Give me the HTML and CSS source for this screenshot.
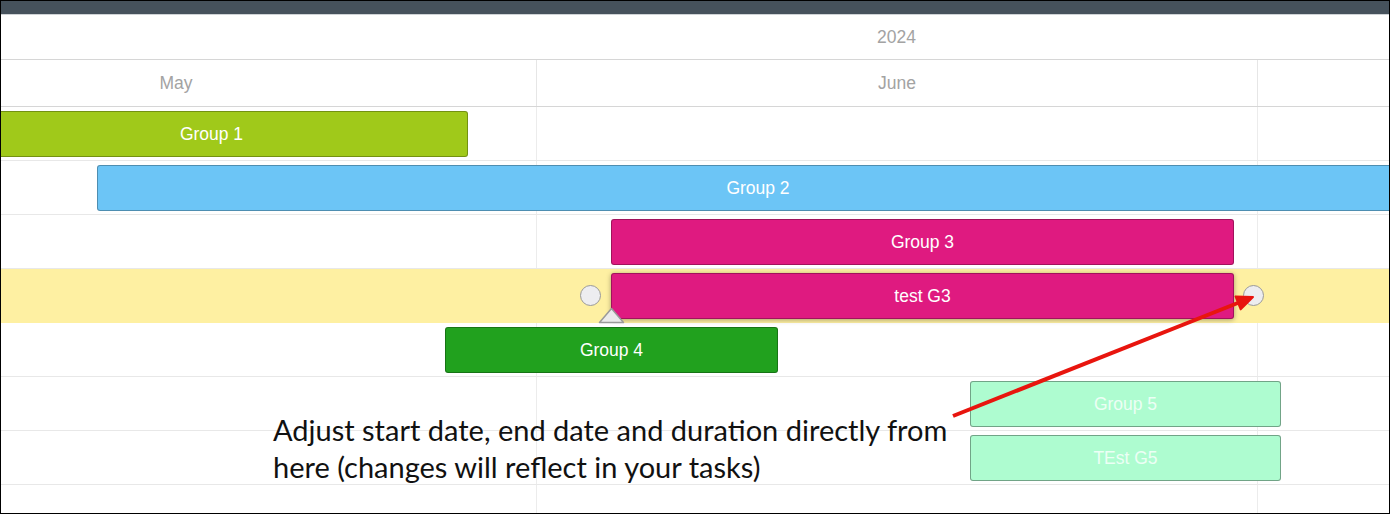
FILE: index.html
```html
<!DOCTYPE html>
<html lang="en">
<head>
    <meta charset="UTF-8">
    <meta name="viewport" content="width=device-width, initial-scale=1.0">
    <title>Gantt - timeline</title>
    <link rel="stylesheet" href="styles.css">
</head>
<body>
    <div class="frame">
        <div class="topbar"></div>

        <!-- timeline header -->
        <div class="year-row"><div class="year">2024</div></div>
        <div class="month-row">
            <div class="month month-first">May</div>
            <div class="month">June</div>
            <div class="month"></div>
        </div>

        <!-- task rows -->
        <div class="rows">
            <div class="row"><div class="bar bar-lime" style="margin-left:-46px;width:513px">Group 1</div></div>
            <div class="row"><div class="bar bar-blue" style="margin-left:96px;width:1322px">Group 2</div></div>
            <div class="row"><div class="bar bar-pink" style="margin-left:610px;width:623px">Group 3</div></div>
            <div class="row row-active"><div class="bar bar-pink bar-selected" style="margin-left:610px;width:623px">test G3</div></div>
            <div class="row"><div class="bar bar-green" style="margin-left:444px;width:333px">Group 4</div></div>
            <div class="row"><div class="bar bar-mint" style="margin-left:969px;width:311px">Group 5</div></div>
            <div class="row"><div class="bar bar-mint" style="margin-left:969px;width:311px">TEst G5</div></div>
            <div class="row row-last"></div>
        </div>

        <!-- drag handles of the selected task -->
        <div class="handle handle-start"></div>
        <div class="handle handle-end"></div>
        <svg class="progress-handle" width="27" height="17" viewBox="0 0 27 17">
            <polygon points="13.5,1.5 25.5,15.5 1.5,15.5" fill="#ebebeb" stroke="#9a9a9a" stroke-width="1.5" stroke-linejoin="round"/>
        </svg>

        <!-- annotation -->
        <svg class="arrow" width="1390" height="514" viewBox="0 0 1390 514">
            <line x1="952" y1="415" x2="1238" y2="301.5" stroke="#e8150e" stroke-width="4"/>
            <polygon points="1252,296 1239.7,308.4 1234.5,295.4" fill="#e8150e" stroke="#e8150e" stroke-width="2" stroke-linejoin="round"/>
        </svg>
        <div class="note">Adjust start date, end date and duration directly from<br>here (changes will reflect in your tasks)</div>
    </div>
</body>
</html>
```

FILE: styles.css
```css
body {
    margin: 0;
    font-family: "Liberation Sans", Arial, sans-serif;
    background: #fff;
}

.frame {
    position: relative;
    width: 1390px;
    height: 514px;
    box-sizing: border-box;
    border: 1px solid #000;
    overflow: hidden;
    background: #fff;
}

.topbar {
    height: 13px;
    background: #46525c;
    border-bottom: 1px solid #cfd3d6;
}

/* header */
.year-row {
    height: 44px;
    border-bottom: 1px solid #d6d6d6;
    padding-left: 535px;
    display: flex;
    align-items: center;
}

.year {
    width: 721px;
    text-align: center;
    color: #a3a3a3;
    font-size: 17.5px;
}

.month-row {
    height: 46px;
    border-bottom: 1px solid #d6d6d6;
    display: flex;
}

.month {
    flex: 0 0 721px;
    box-sizing: border-box;
    border-left: 1px solid #e6e6e6;
    display: flex;
    align-items: center;
    justify-content: center;
    color: #a3a3a3;
    font-size: 17.5px;
}

.month-first {
    margin-left: -186px;
}

/* rows */
.rows {
    background:
        linear-gradient(#ececec, #ececec) 535px 0 / 1px 100% no-repeat,
        linear-gradient(#ececec, #ececec) 1256px 0 / 1px 100% no-repeat;
}

.row {
    height: 49px;
    padding-top: 4px;
    border-bottom: 1px solid #e8e8e8;
}

.row-active {
    background: #fef0a2;
    border-bottom-color: #fef0a2;
}

.row-last {
    border-bottom: none;
}

.bar {
    height: 46px;
    box-sizing: border-box;
    border: 1px solid rgba(0, 0, 0, 0.28);
    border-radius: 3px;
    display: flex;
    align-items: center;
    justify-content: center;
    color: #fff;
    font-size: 17.5px;
    white-space: nowrap;
}

.bar-lime { background: #a0c91a; }
.bar-blue { background: #6cc5f6; }
.bar-pink { background: #df1a80; }
.bar-green { background: #21a11e; }

.bar-mint {
    background: #aefcd0;
    color: #ecfff5;
    border-color: rgba(0, 0, 0, 0.35);
}

.bar-selected {
    box-shadow: 0 1px 5px rgba(0, 0, 0, 0.35);
}

/* handles */
.handle {
    position: absolute;
    top: 284px;
    width: 21px;
    height: 21px;
    box-sizing: border-box;
    border: 1.5px solid #9a9a9a;
    border-radius: 50%;
    background: #ededf0;
}

.handle-start { left: 579px; }
.handle-end { left: 1242px; }

.progress-handle {
    position: absolute;
    left: 597px;
    top: 306px;
}

/* annotation */
.arrow {
    position: absolute;
    left: 0;
    top: 0;
    pointer-events: none;
}

.note {
    position: absolute;
    left: 272px;
    top: 410px;
    font-family: Lato, "Open Sans", sans-serif;
    font-size: 29px;
    line-height: 37px;
    color: #111;
    white-space: nowrap;
}
```
